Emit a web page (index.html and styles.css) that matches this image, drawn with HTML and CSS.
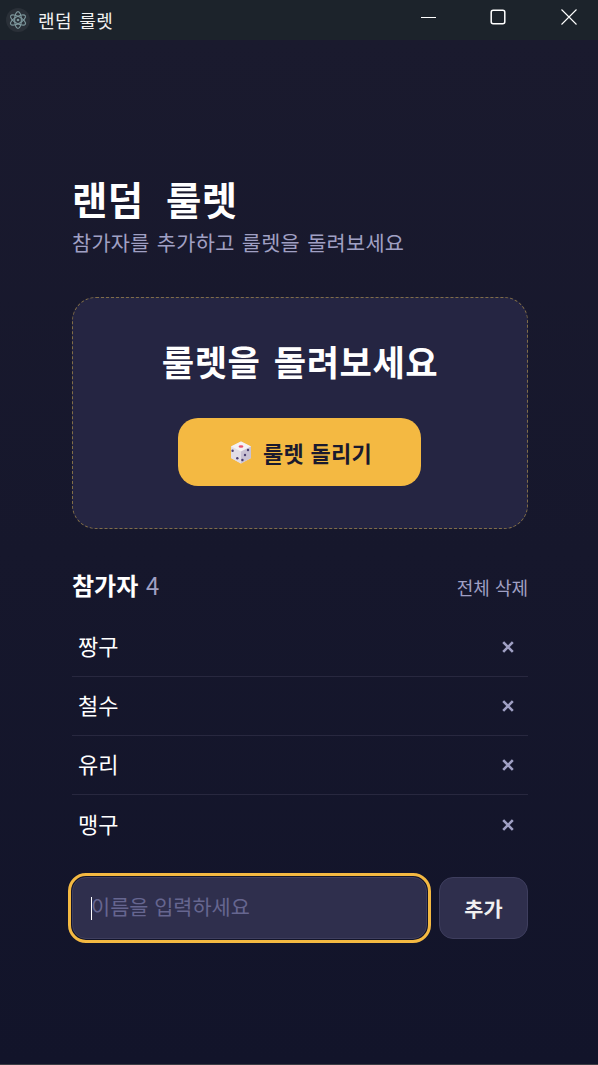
FILE: index.html
```html
<!DOCTYPE html>
<html lang="ko">

<head>
    <meta charset="UTF-8">
    <meta name="viewport" content="width=device-width, initial-scale=1.0">
    <title>랜덤 룰렛</title>
    <link rel="stylesheet" href="styles.css">
</head>

<body>
    <div class="titlebar">
        <div class="app_name">
            <span class="app_icon">
                <svg width="18" height="18" viewBox="0 0 16 16" fill="none" stroke="#7d979c" stroke-width="1">
                    <ellipse cx="8" cy="8" rx="7.5" ry="3" transform="rotate(30 8 8)"></ellipse>
                    <ellipse cx="8" cy="8" rx="7.5" ry="3" transform="rotate(-30 8 8)"></ellipse>
                    <ellipse cx="8" cy="8" rx="3" ry="7.5"></ellipse>
                    <circle cx="8" cy="8" r="1.2" fill="#7d979c" stroke="none"></circle>
                </svg>
            </span>
            <span>랜덤 룰렛</span>
        </div>
        <div class="win_buttons">
            <svg class="win_min" width="16" height="16" viewBox="0 0 16 16" fill="none" stroke="#fff" stroke-width="1">
                <path d="M0 8.5H15"></path>
            </svg>
            <svg width="16" height="16" viewBox="0 0 16 16" fill="none" stroke="#fff" stroke-width="1.5">
                <rect x="1.2" y="1.2" width="13.6" height="13.6" rx="2"></rect>
            </svg>
            <svg width="16" height="16" viewBox="0 0 16 16" fill="none" stroke="#fff" stroke-width="1.1">
                <path d="M0.5 0.5L15.5 15.5M15.5 0.5L0.5 15.5"></path>
            </svg>
        </div>
    </div>

    <div class="container">
        <h1 class="title">랜덤 룰렛</h1>
        <p class="subtitle">참가자를 추가하고 룰렛을 돌려보세요</p>

        <div class="spin_card">
            <h2 class="spin_title">룰렛을 돌려보세요</h2>
            <button type="button" class="spin_btn">
                <svg width="22" height="23" viewBox="0 0 22 23">
                    <path d="M11 0.5L21 5.5V17L11 22.5L1 17V5.5Z" fill="#e8e4ec"></path>
                    <path d="M11 0.5L21 5.5L11 10.5L1 5.5Z" fill="#f4f2f4"></path>
                    <path d="M1 5.5L11 10.5V22.5L1 17Z" fill="#e2dde6"></path>
                    <path d="M11 10.5L21 5.5V17L11 22.5Z" fill="#c9c2d4"></path>
                    <ellipse cx="11" cy="5.5" rx="2.4" ry="1.3" fill="#e8536e"></ellipse>
                    <circle cx="2.6" cy="9.7" r="1.2" fill="#4b3f72"></circle>
                    <circle cx="7.3" cy="17.3" r="1.2" fill="#4b3f72"></circle>
                    <circle cx="18" cy="9" r="1.2" fill="#4b3f72"></circle>
                    <circle cx="15" cy="14" r="1.2" fill="#4b3f72"></circle>
                    <circle cx="12.4" cy="19" r="1.2" fill="#4b3f72"></circle>
                </svg>
                <span>룰렛 돌리기</span>
            </button>
        </div>

        <div class="list_head">
            <div class="list_title"><strong>참가자</strong> <span class="count">4</span></div>
            <button type="button" class="clear_btn">전체 삭제</button>
        </div>

        <ul class="list">
            <li class="item">
                <span class="item_name">짱구</span>
                <button type="button" class="del_btn" aria-label="삭제">
                    <svg width="12" height="12" viewBox="0 0 12 12"><path d="M1.2 1.2L10.8 10.8M10.8 1.2L1.2 10.8"></path></svg>
                </button>
            </li>
            <li class="item">
                <span class="item_name">철수</span>
                <button type="button" class="del_btn" aria-label="삭제">
                    <svg width="12" height="12" viewBox="0 0 12 12"><path d="M1.2 1.2L10.8 10.8M10.8 1.2L1.2 10.8"></path></svg>
                </button>
            </li>
            <li class="item">
                <span class="item_name">유리</span>
                <button type="button" class="del_btn" aria-label="삭제">
                    <svg width="12" height="12" viewBox="0 0 12 12"><path d="M1.2 1.2L10.8 10.8M10.8 1.2L1.2 10.8"></path></svg>
                </button>
            </li>
            <li class="item">
                <span class="item_name">맹구</span>
                <button type="button" class="del_btn" aria-label="삭제">
                    <svg width="12" height="12" viewBox="0 0 12 12"><path d="M1.2 1.2L10.8 10.8M10.8 1.2L1.2 10.8"></path></svg>
                </button>
            </li>
        </ul>

        <form class="add_form">
            <div class="input_wrap">
                <input type="text" class="name_input" placeholder="이름을 입력하세요">
                <span class="caret"></span>
            </div>
            <button type="button" class="add_btn">추가</button>
        </form>
    </div>
</body>

</html>
```

FILE: styles.css
```css
* {
    margin: 0;
    padding: 0;
    box-sizing: border-box;
}

html,
body {
    height: 100%;
}

body {
    display: flex;
    flex-direction: column;
    color: #fff;
    font-family: "Noto Sans CJK KR", "Noto Sans", sans-serif;
    overflow: hidden;
}

button {
    font-family: inherit;
    border: none;
    background: none;
}

.titlebar {
    height: 40px;
    flex-shrink: 0;
    background-color: #1c232b;
    display: flex;
    justify-content: space-between;
    align-items: center;
    padding: 0 21px 0 6px;
}

.app_name {
    display: flex;
    align-items: center;
    gap: 8px;
    font-size: 18px;
    line-height: 24px;
    letter-spacing: 0.4px;
    word-spacing: 2px;
    color: #f2f2f2;
}

.app_icon {
    width: 24px;
    height: 24px;
    border-radius: 50%;
    background-color: #2a3038;
    display: flex;
    justify-content: center;
    align-items: center;
}

.win_buttons {
    display: flex;
    gap: 55px;
    align-items: center;
    margin-bottom: 6px;
}

.win_min {
    margin-right: -2px;
}

.container {
    flex: 1;
    padding: 133px 70px 0 72px;
    background: linear-gradient(180deg, #1a1a2e, #12142a);
    border-bottom: 1px solid #3c3d45;
}

.title {
    font-size: 38.4px;
    line-height: 50px;
    font-weight: 700;
    letter-spacing: 0.5px;
    word-spacing: 11px;
}

.subtitle {
    font-size: 20.8px;
    line-height: 28px;
    color: #a0a0c4;
    margin-top: 5px;
    letter-spacing: 0.3px;
    word-spacing: 1px;
}

.spin_card {
    margin-top: 41px;
    height: 232px;
    background-color: #252542;
    border: 1px dashed #806d48;
    border-radius: 24px;
    display: flex;
    flex-direction: column;
    align-items: center;
    padding-top: 39px;
}

.spin_title {
    font-size: 35.2px;
    line-height: 48px;
    font-weight: 700;
    letter-spacing: 0.5px;
    word-spacing: 3px;
}

.spin_btn {
    margin-top: 33px;
    margin-right: 1px;
    padding-left: 3px;
    width: 243px;
    height: 68px;
    background-color: #f4b942;
    border-radius: 20px;
    color: #1a1a2e;
    font-size: 22px;
    font-weight: 700;
    letter-spacing: 0.3px;
    display: flex;
    justify-content: center;
    align-items: center;
    gap: 11px;
}

.list_head {
    margin-top: 40px;
    display: flex;
    justify-content: space-between;
    align-items: center;
    height: 36px;
}

.list_title {
    font-size: 24px;
    line-height: 36px;
    margin-bottom: 4px;
}

.list_title strong {
    font-weight: 700;
}

.count {
    font-size: 24px;
    color: #a0a0c4;
    margin-left: 1px;
}

.clear_btn {
    font-size: 18px;
    line-height: 26px;
    color: #a0a0c4;
}

.list {
    list-style: none;
    margin-top: 13px;
}

.item {
    height: 59px;
    display: flex;
    justify-content: space-between;
    align-items: center;
    padding: 0 14px 0 6px;
    font-size: 22px;
    border-bottom: 1px solid #28283f;
}

.item:last-child {
    border-bottom: none;
}

.item_name {
    margin-bottom: 4px;
}

.del_btn {
    display: flex;
}

.del_btn path {
    fill: none;
    stroke: #a0a0c4;
    stroke-width: 2.6;
}

.add_form {
    margin-top: 23px;
    display: flex;
    align-items: center;
    gap: 12px;
}

.input_wrap {
    flex: 1;
    position: relative;
}

.name_input {
    display: block;
    width: 100%;
    height: 62px;
    padding: 0 18px 4px;
    background-color: #2f2f4d;
    border: 1px solid #3e3e5e;
    border-radius: 14px;
    outline: 3px solid #f4b942;
    outline-offset: 1px;
    color: #fff;
    font-family: inherit;
    font-size: 20.8px;
    caret-color: transparent;
}

.name_input::placeholder {
    color: #666690;
}

/* stands in for the blinking text cursor */
.caret {
    position: absolute;
    left: 19px;
    top: 20px;
    width: 1px;
    height: 23px;
    background-color: #fff;
}

.add_btn {
    width: 89px;
    height: 62px;
    background-color: #2f2f4d;
    border: 1px solid #3e3e5e;
    border-radius: 14px;
    color: #f0f0f0;
    font-size: 20.8px;
    font-weight: 700;
}
```
